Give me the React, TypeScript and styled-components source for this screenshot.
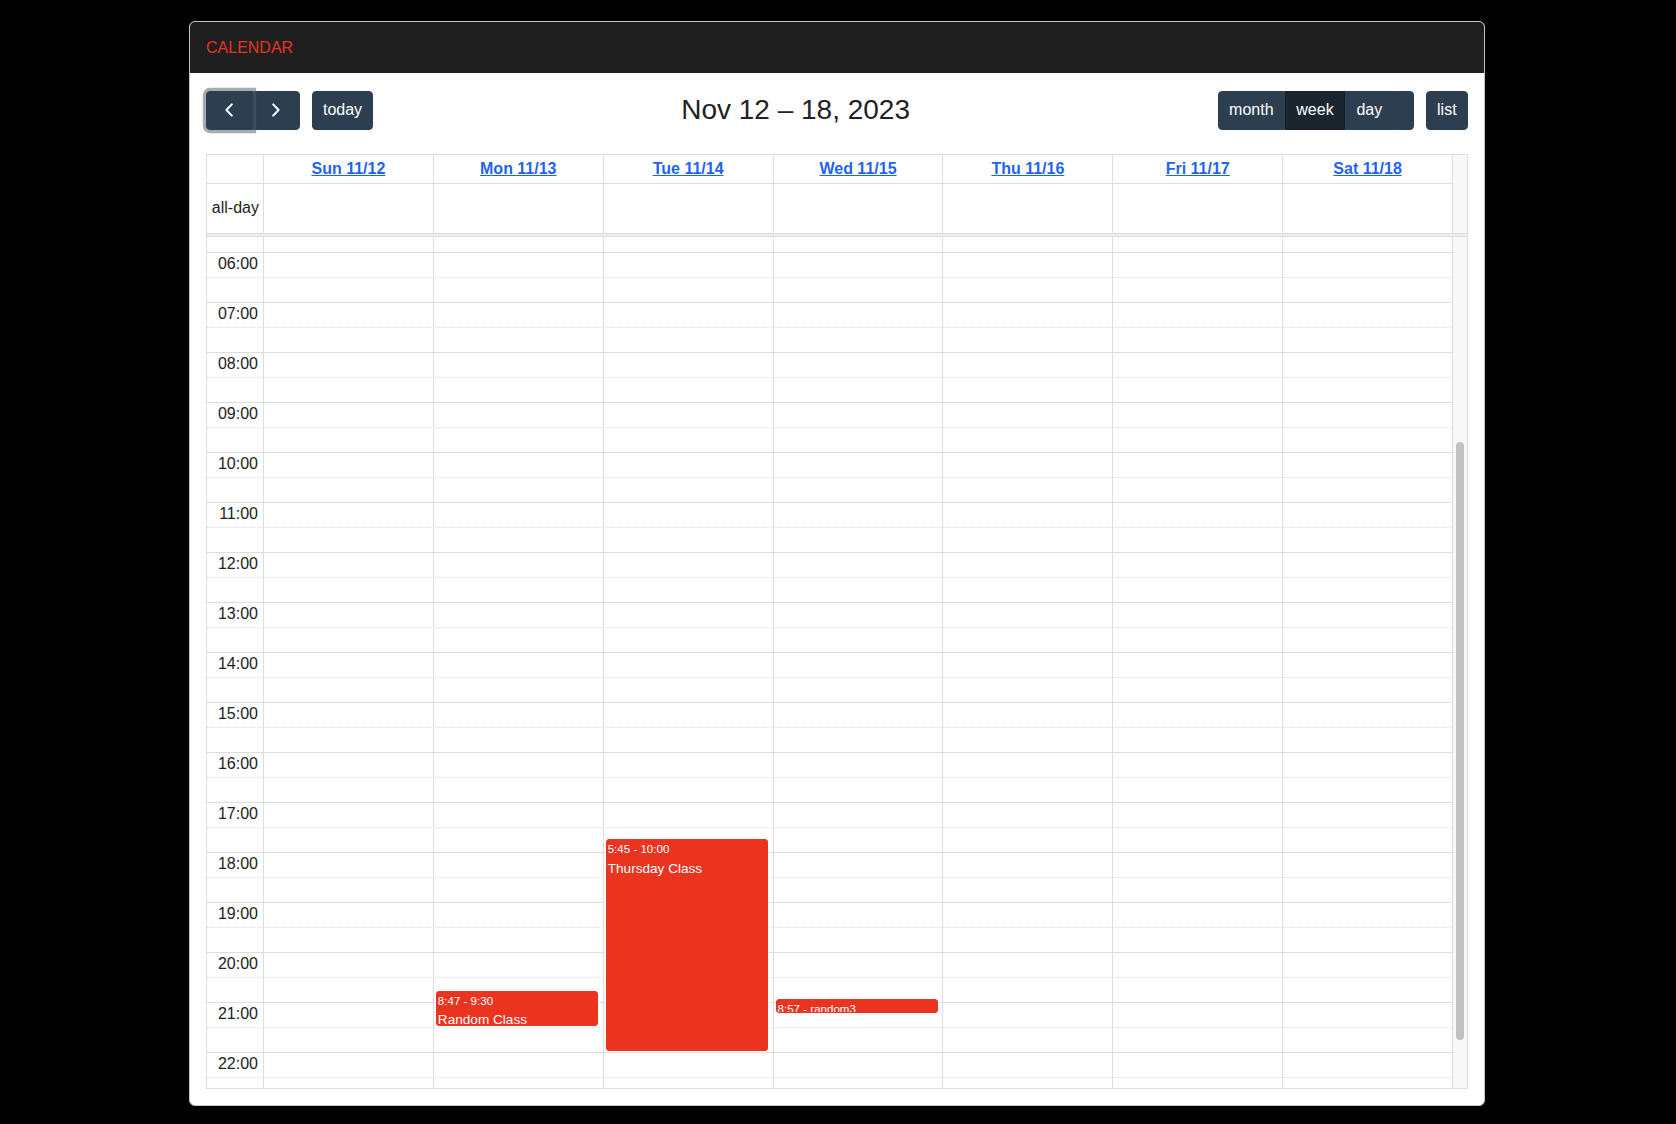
import React, { useLayoutEffect, useRef } from 'react';
import styled, { createGlobalStyle, css } from 'styled-components';

const GlobalStyle = createGlobalStyle`
  html, body { margin: 0; padding: 0; background: #000; }
  body { font-family: "Liberation Sans", Arial, Helvetica, sans-serif; font-size: 16px; color: #222; }
  *, *::before, *::after { box-sizing: border-box; }
`;

const HOUR = 50;
const FIRST_HOUR = 5.5; // first rendered slot
const LAST_HOUR = 23; // end of rendered slots
const SCROLL_TOP = 10;

const Page = styled.div`
  display: flex;
  justify-content: center;
  padding: 21px 2px 0 0;
`;

const Card = styled.div`
  width: 1296px;
  background: #fff;
  border: 1px solid #c4c4c4;
  border-radius: 6px;
  overflow: hidden;
`;

const CardHeader = styled.div`
  height: 51px;
  background: #1f1f1f;
  padding: 0 16px;
  display: flex;
  align-items: center;
  color: #e8341f;
  font-size: 16px;
`;

const CardBody = styled.div`
  padding: 18px 16px 16px;
`;

const Toolbar = styled.div`
  display: flex;
  justify-content: space-between;
  align-items: center;
  margin-bottom: 24px;
`;

const Chunk = styled.div`
  display: flex;
  align-items: center;
  gap: 12px;
`;

const Title = styled.h2`
  margin: 0 0 2px;
  font-size: 28px;
  font-weight: 400;
  line-height: 1.2;
  color: #222;
`;

const Group = styled.div`
  display: inline-flex;
  position: relative;
`;

type Pos = 'first' | 'middle' | 'last' | 'single';

const Button = styled.button<{ $pos?: Pos; $active?: boolean; $focused?: boolean; $blank?: boolean }>`
  position: relative;
  margin: 0;
  font-family: inherit;
  font-size: 16px;
  line-height: 1.5;
  padding: ${(p) => (p.$blank ? '6.4px 9px' : '6.4px 10.4px')};
  min-height: 38.8px;
  color: #fff;
  background: ${(p) => (p.$active ? '#1a252f' : '#2c3e50')};
  border: 1px solid ${(p) => (p.$active ? '#151e27' : '#2c3e50')};
  cursor: pointer;
  display: inline-flex;
  align-items: center;
  justify-content: center;
  border-radius: ${(p) =>
    p.$pos === 'first'
      ? '4px 0 0 4px'
      : p.$pos === 'last'
      ? '0 4px 4px 0'
      : p.$pos === 'middle'
      ? '0'
      : '4px'};
  ${(p) =>
    p.$focused &&
    css`
      z-index: 1;
      box-shadow: 0 0 0 3.2px rgba(76, 91, 106, 0.5);
    `}
`;

const IconBox = styled.span`
  width: 24px;
  height: 24px;
  display: flex;
  align-items: center;
  justify-content: center;
`;

const Chevron = ({ dir }: { dir: 'left' | 'right' }) => (
  <IconBox>
    <svg width="10" height="14" viewBox="0 0 10 14" fill="none">
      <path
        d={dir === 'left' ? 'M7.8 1.4 L2.4 7 L7.8 12.6' : 'M2.2 1.4 L7.6 7 L2.2 12.6'}
        stroke="#fff"
        strokeWidth="2"
        strokeLinecap="round"
        strokeLinejoin="round"
      />
    </svg>
  </IconBox>
);

const Table = styled.div`
  border: 1px solid #ddd;
`;

const HeadGrid = styled.div`
  display: grid;
  grid-template-columns: 56px repeat(7, 1fr) 15px;
  grid-template-rows: 29px 50px;
`;

const HeadCell = styled.div<{ $axis?: boolean }>`
  border-bottom: 1px solid #ddd;
  border-left: ${(p) => (p.$axis ? 'none' : '1px solid #ddd')};
  display: flex;
  align-items: center;
  justify-content: center;
  padding: 2px 4px;
  line-height: 1.5;
`;

const DayLink = styled.a`
  color: #1f63f2;
  font-weight: 700;
  text-decoration: underline;
  cursor: pointer;
`;

const AllDayCell = styled.div<{ $axis?: boolean }>`
  border-bottom: 1px solid #ddd;
  border-left: ${(p) => (p.$axis ? 'none' : '1px solid #ddd')};
  display: flex;
  align-items: center;
  justify-content: flex-end;
  padding: 0 4px;
  color: #222;
`;

const Gutter = styled.div`
  grid-column: 9;
  grid-row: 1 / span 2;
  background: #f8f8f8;
  border-left: 1px solid #ddd;
  border-bottom: 1px solid #ddd;
`;

const Divider = styled.div`
  height: 3px;
  background: #eee;
  border-bottom: 1px solid #ddd;
`;

const Scroller = styled.div`
  height: 851px;
  display: flex;
`;

const Viewport = styled.div`
  flex: 1;
  min-width: 0;
  overflow: hidden;
`;

const Track = styled.div`
  width: 15px;
  flex: none;
  background: #f8f8f8;
  border-left: 1px solid #ddd;
  padding: 205px 3px 0 3px;
`;

const Thumb = styled.div`
  width: 8px;
  height: 598px;
  border-radius: 4px;
  background: #c1c1c1;
`;

const Body = styled.div`
  position: relative;
`;

const SlotRow = styled.div<{ $minor: boolean }>`
  height: 25px;
  border-top: 1px ${(p) => (p.$minor ? 'dotted' : 'solid')} #ddd;
  display: flex;
`;

const SlotLabel = styled.div`
  width: 56px;
  text-align: right;
  padding-right: 5px;
  line-height: 22px;
  color: #222;
  white-space: nowrap;
`;

const Columns = styled.div`
  position: absolute;
  top: 0;
  bottom: 0;
  left: 56px;
  right: 0;
  display: grid;
  grid-template-columns: repeat(7, 1fr);
`;

const DayCol = styled.div`
  position: relative;
  border-left: 1px solid #ddd;
`;

const EventsLayer = styled.div`
  position: absolute;
  top: 0;
  bottom: 0;
  left: 2px;
  right: 2.5%;
`;

const EventBox = styled.div`
  position: absolute;
  left: 0;
  right: 0;
  background: #ea3420;
  border: 1px solid #ea3420;
  border-radius: 3px;
  box-shadow: 0 0 0 1px #fff;
  overflow: hidden;
  color: #fff;
  padding: 1px 1px 0;
  line-height: 1.5;
`;

const EventTime = styled.div`
  font-size: 11.56px;
  white-space: nowrap;
`;

const EventTitle = styled.div`
  font-size: 13.6px;
  white-space: nowrap;
`;

const ShortLine = styled.div`
  font-size: 11.56px;
  white-space: nowrap;
`;

const days = ['Sun 11/12', 'Mon 11/13', 'Tue 11/14', 'Wed 11/15', 'Thu 11/16', 'Fri 11/17', 'Sat 11/18'];

type Ev = { day: number; start: number; end: number; time: string; title: string; short?: boolean };

const events: Ev[] = [
  { day: 1, start: 20 + 47 / 60, end: 21.5, time: '8:47 - 9:30', title: 'Random Class' },
  { day: 2, start: 17.75, end: 22, time: '5:45 - 10:00', title: 'Thursday Class' },
  { day: 3, start: 20 + 57 / 60, end: 21.25, time: '8:57', title: 'random3', short: true },
];

const pad = (n: number) => (n < 10 ? `0${n}` : `${n}`);

export default function App() {
  const scrollRef = useRef<HTMLDivElement>(null);

  useLayoutEffect(() => {
    if (scrollRef.current) scrollRef.current.scrollTop = SCROLL_TOP;
  }, []);

  const slotCount = (LAST_HOUR - FIRST_HOUR) * 2;
  const slots = Array.from({ length: slotCount }, (_, i) => FIRST_HOUR + i / 2);

  return (
    <>
      <GlobalStyle />
      <Page>
        <Card>
          <CardHeader>CALENDAR</CardHeader>
          <CardBody>
            <Toolbar>
              <Chunk>
                <Group>
                  <Button $pos="first" $focused aria-label="prev">
                    <Chevron dir="left" />
                  </Button>
                  <Button $pos="last" aria-label="next">
                    <Chevron dir="right" />
                  </Button>
                </Group>
                <Button $pos="single">today</Button>
              </Chunk>
              <Chunk>
                <Title>Nov 12 – 18, 2023</Title>
              </Chunk>
              <Chunk>
                <Group>
                  <Button $pos="first">month</Button>
                  <Button $pos="middle" $active>
                    week
                  </Button>
                  <Button $pos="middle">day</Button>
                  <Button $pos="last" $blank />
                </Group>
                <Button $pos="single">list</Button>
              </Chunk>
            </Toolbar>

            <Table>
              <HeadGrid>
                <HeadCell $axis />
                {days.map((d) => (
                  <HeadCell key={d}>
                    <DayLink>{d}</DayLink>
                  </HeadCell>
                ))}
                <Gutter />
                <AllDayCell $axis>all-day</AllDayCell>
                {days.map((d) => (
                  <AllDayCell key={`ad-${d}`} />
                ))}
              </HeadGrid>
              <Divider />
              <Scroller>
                <Viewport ref={scrollRef}>
                  <Body>
                    {slots.map((h) => (
                      <SlotRow key={h} $minor={h % 1 !== 0}>
                        <SlotLabel>{h % 1 === 0 ? `${pad(h)}:00` : ''}</SlotLabel>
                      </SlotRow>
                    ))}
                    <Columns>
                      {days.map((d, di) => (
                        <DayCol key={`col-${d}`}>
                          <EventsLayer>
                            {events
                              .filter((e) => e.day === di)
                              .map((e) => (
                                <EventBox
                                  key={e.title}
                                  style={{
                                    top: (e.start - FIRST_HOUR) * HOUR,
                                    height: (e.end - e.start) * HOUR - 1,
                                  }}
                                >
                                  {e.short ? (
                                    <ShortLine>
                                      {e.time} - {e.title}
                                    </ShortLine>
                                  ) : (
                                    <>
                                      <EventTime>{e.time}</EventTime>
                                      <EventTitle>{e.title}</EventTitle>
                                    </>
                                  )}
                                </EventBox>
                              ))}
                          </EventsLayer>
                        </DayCol>
                      ))}
                    </Columns>
                  </Body>
                </Viewport>
                <Track>
                  <Thumb />
                </Track>
              </Scroller>
            </Table>
          </CardBody>
        </Card>
      </Page>
    </>
  );
}
